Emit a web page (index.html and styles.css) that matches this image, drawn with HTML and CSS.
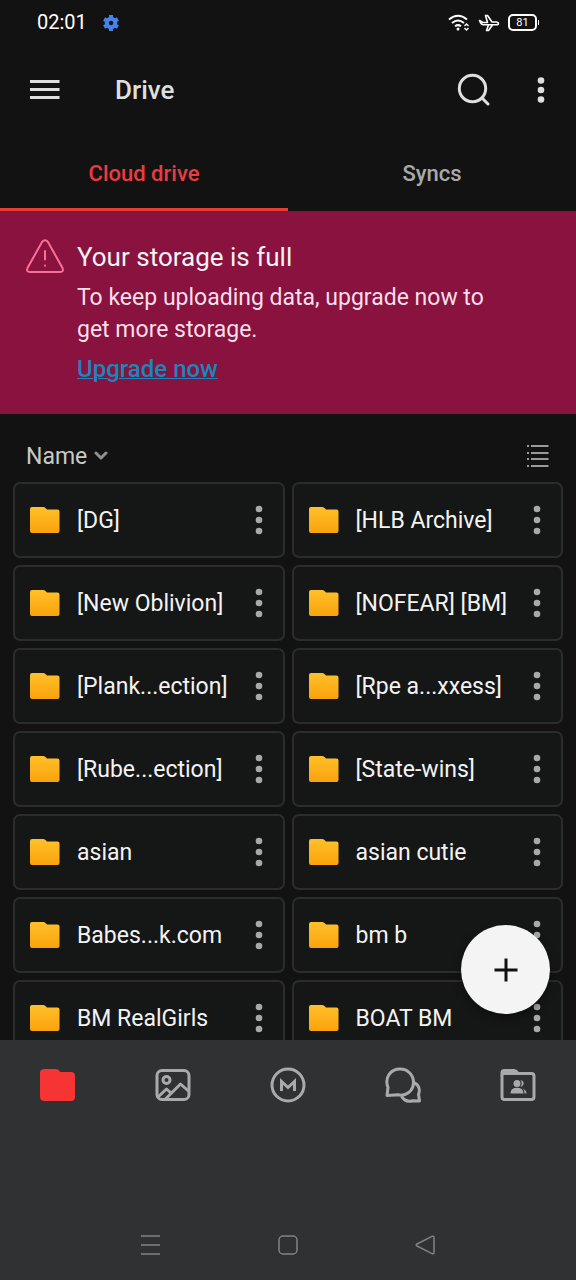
FILE: index.html
```html
<!DOCTYPE html>
<html lang="en">
<head>
<meta charset="utf-8">
<meta name="viewport" content="width=device-width, initial-scale=1">
<title>Drive</title>
<link rel="stylesheet" href="styles.css">
</head>
<body>
<svg class="sprite" aria-hidden="true">
  <defs>
    <linearGradient id="gold" x1="0" y1="0" x2="0" y2="1"><stop offset="0" stop-color="#ffc02a"/><stop offset="1" stop-color="#faa30c"/></linearGradient>
    <symbol id="folder" viewBox="0 0 30 26"><path fill="url(#gold)" d="M2 0H13Q14.500 0 15.500 1L17 2.500H27.500Q29.500 2.500 29.500 4.500V24Q29.500 26 27.500 26H2Q0 26 0 24V2Q0 0 2 0Z"/></symbol>
    <symbol id="dots" viewBox="0 0 8 30"><g fill="currentColor"><circle cx="4" cy="4" r="3.300"/><circle cx="4" cy="15" r="3.300"/><circle cx="4" cy="26" r="3.300"/></g></symbol>
  </defs>
</svg>
<div class="screen">
  <div class="status">
    <span class="clock">02:01</span>
    <svg class="gear" width="16" height="16" viewBox="0 0 16 16"><path fill="none" stroke="#4583ec" stroke-width="4" d="M8 3.800A4.200 4.200 0 1 1 8 12.200A4.200 4.200 0 1 1 8 3.800"/><path stroke="#4583ec" stroke-width="4" d="M8 0V3M8 13V16M1.100 4L3.700 5.500M12.300 10.500L14.900 12M1.100 12L3.700 10.500M12.300 5.500L14.900 4"/></svg>
    <div class="status-right">
      <svg width="22" height="18" viewBox="0 0 22 18" fill="none" stroke="#fff" stroke-width="2"><path d="M1 5.500Q10 -2 19 5.500M4 9Q10 4 16 9M7 12.300Q10 10 13 12.300"/><circle cx="10" cy="15" r="1.500" fill="#fff" stroke="none"/><path stroke-width="1.400" d="M16.500 12l2-2 2 2M16.500 14l2 2 2-2"/></svg>
      <svg width="22" height="18" viewBox="0 0 22 18" fill="none" stroke="#fff" stroke-width="1.600" stroke-linejoin="round"><path d="M1.500 6.500L5 8.500H9.500L7.500 1.500H9.500L14 8H18.500Q20.500 8.300 20.500 9.500T18.500 10.700H5Q3 10.500 1.500 6.500ZM10.500 11L8.500 16.500H10.500L14.500 11"/></svg>
      <span class="battery">81</span>
    </div>
  </div>

  <header class="appbar">
    <button class="icon-btn" aria-label="Menu"><svg width="30" height="20" viewBox="0 0 30 20" stroke="#dfdfdf" stroke-width="3"><path d="M0 1.500H29.500M0 9.500H29.500M0 17.500H29.500"/></svg></button>
    <h1 class="title">Drive</h1>
    <button class="icon-btn search" aria-label="Search"><svg width="34" height="34" viewBox="0 0 34 34" fill="none" stroke="#dfdfdf" stroke-width="3" stroke-linecap="round"><circle cx="15.500" cy="15.500" r="13.200"/><path d="M25 25L31 31"/></svg></button>
    <button class="icon-btn" aria-label="More options"><svg width="8" height="26" viewBox="0 0 8 26" fill="#dfdfdf"><circle cx="4" cy="3.500" r="3.300"/><circle cx="4" cy="13" r="3.300"/><circle cx="4" cy="22.500" r="3.300"/></svg></button>
  </header>

  <nav class="tabs">
    <button class="tab active">Cloud drive</button>
    <button class="tab">Syncs</button>
  </nav>

  <section class="banner">
    <svg class="warning" width="38" height="36" viewBox="0 0 38 36" fill="none" stroke="#fd6f95" stroke-width="2" stroke-linecap="round"><path d="M16 3Q19-.6 22 3L36.500 29Q38 33 34 33H4Q0 33 1.500 29Z"/><path d="M19 12V20.500M19 26.500V26.700"/></svg>
    <div class="banner-text">
      <h2 class="banner-title">Your storage is full</h2>
      <p class="banner-body">To keep uploading data, upgrade now to get more storage.</p>
      <a class="upgrade" href="#">Upgrade now</a>
    </div>
  </section>

  <main class="content">
    <div class="sort-row">
      <button class="sort">Name <svg width="14" height="10" viewBox="0 0 14 10" fill="none" stroke="#909090" stroke-width="3" stroke-linecap="round" stroke-linejoin="round"><path d="M2 2L7 7L12 2"/></svg></button>
      <button class="icon-btn" aria-label="List view"><svg width="22" height="22" viewBox="0 0 22 22" stroke="#9b9b9b" stroke-width="2"><path d="M0 1H2M4 1H21.500M0 8H2M4 8H21.500M0 14H2M4 14H21.500M0 21H2M4 21H21.500"/></svg></button>
    </div>
    <div class="grid">
      <article class="card"><svg class="folder"><use href="#folder"/></svg><span class="name">[DG]</span><button class="more" aria-label="Options for [DG]"><svg class="dots"><use href="#dots"/></svg></button></article>
      <article class="card"><svg class="folder"><use href="#folder"/></svg><span class="name">[HLB Archive]</span><button class="more" aria-label="Options for [HLB Archive]"><svg class="dots"><use href="#dots"/></svg></button></article>
      <article class="card"><svg class="folder"><use href="#folder"/></svg><span class="name">[New Oblivion]</span><button class="more" aria-label="Options for [New Oblivion]"><svg class="dots"><use href="#dots"/></svg></button></article>
      <article class="card"><svg class="folder"><use href="#folder"/></svg><span class="name">[NOFEAR] [BM]</span><button class="more" aria-label="Options for [NOFEAR] [BM]"><svg class="dots"><use href="#dots"/></svg></button></article>
      <article class="card"><svg class="folder"><use href="#folder"/></svg><span class="name">[Plank...ection]</span><button class="more" aria-label="Options for [Plank...ection]"><svg class="dots"><use href="#dots"/></svg></button></article>
      <article class="card"><svg class="folder"><use href="#folder"/></svg><span class="name">[Rpe a...xxess]</span><button class="more" aria-label="Options for [Rpe a...xxess]"><svg class="dots"><use href="#dots"/></svg></button></article>
      <article class="card"><svg class="folder"><use href="#folder"/></svg><span class="name">[Rube...ection]</span><button class="more" aria-label="Options for [Rube...ection]"><svg class="dots"><use href="#dots"/></svg></button></article>
      <article class="card"><svg class="folder"><use href="#folder"/></svg><span class="name">[State-wins]</span><button class="more" aria-label="Options for [State-wins]"><svg class="dots"><use href="#dots"/></svg></button></article>
      <article class="card"><svg class="folder"><use href="#folder"/></svg><span class="name">asian</span><button class="more" aria-label="Options for asian"><svg class="dots"><use href="#dots"/></svg></button></article>
      <article class="card"><svg class="folder"><use href="#folder"/></svg><span class="name">asian cutie</span><button class="more" aria-label="Options for asian cutie"><svg class="dots"><use href="#dots"/></svg></button></article>
      <article class="card"><svg class="folder"><use href="#folder"/></svg><span class="name">Babes...k.com</span><button class="more" aria-label="Options for Babes...k.com"><svg class="dots"><use href="#dots"/></svg></button></article>
      <article class="card"><svg class="folder"><use href="#folder"/></svg><span class="name">bm b</span><button class="more" aria-label="Options for bm b"><svg class="dots"><use href="#dots"/></svg></button></article>
      <article class="card"><svg class="folder"><use href="#folder"/></svg><span class="name">BM RealGirls</span><button class="more" aria-label="Options for BM RealGirls"><svg class="dots"><use href="#dots"/></svg></button></article>
      <article class="card"><svg class="folder"><use href="#folder"/></svg><span class="name">BOAT BM</span><button class="more" aria-label="Options for BOAT BM"><svg class="dots"><use href="#dots"/></svg></button></article>
    </div>
    <button class="fab" aria-label="Add"><svg width="24" height="24" viewBox="0 0 24 24" stroke="#111" stroke-width="3"><path d="M12 0.500V23.500M0.500 12H23.500"/></svg></button>
  </main>

  <footer class="bottom">
    <nav class="bottom-nav">
      <button class="nav-btn" aria-label="Drive"><svg width="36" height="36" viewBox="0 0 36 36"><path fill="#f73434" d="M4.500 2H16Q18 2 19 3.500L20.500 5H31Q35 5 35 9V29.500Q35 34 31 34H4.500Q0 34 0 29.500V6Q0 2 4.500 2Z"/></svg></button>
      <button class="nav-btn" aria-label="Photos"><svg width="36" height="36" viewBox="0 0 36 36" fill="none" stroke="#a9aaab" stroke-width="3" stroke-linejoin="round"><rect x="2" y="3.500" width="32" height="29" rx="5"/><circle cx="11.500" cy="13" r="3.500"/><path d="M3 30L11.500 22L16 26M10 32.500L25.500 17L34 24.500"/></svg></button>
      <button class="nav-btn" aria-label="Home"><svg width="36" height="36" viewBox="0 0 36 36" fill="none" stroke="#a9aaab" stroke-width="3"><circle cx="18" cy="18" r="16"/><path d="M11.500 24V14.500L18 20.500L24.500 14.500V24"/></svg></button>
      <button class="nav-btn" aria-label="Chat"><svg width="36" height="36" viewBox="0 0 36 36" fill="none" stroke="#a9aaab" stroke-width="3" stroke-linejoin="round"><path d="M2 28.500L3 20.500C-1 10 6 2 15 2C23 2 28.500 8 28.500 15.500C28.500 24 21 29.500 13 27.800Z"/><path d="M16.500 29C19 34 24 34.700 28 33.700L34.500 34L33.500 27.500C35.500 22 33.500 17.500 28.500 15.500"/></svg></button>
      <button class="nav-btn" aria-label="Shared"><svg width="36" height="36" viewBox="0 0 36 36"><path fill="none" stroke="#a9aaab" stroke-width="3" d="M2 8V30Q2 32.500 4.500 32.500H31.500Q34 32.500 34 30V9Q34 6.500 31.500 6.500H2"/><g fill="#a9aaab"><path d="M4.500 2H14Q16 2 17.500 3.500L20 6.500H5Q3 6.500 2 9H.5V6Q.5 2 4.500 2Z"/><circle cx="17" cy="16.500" r="3.500"/><path d="M10.500 26.500Q10.500 20.700 17 20.700T23.500 26.500ZM20.500 13Q24.500 14 23.500 17.500Q22.500 19.700 20.500 20Q23 16.500 20.500 13ZM23 21.500Q26 23 26.500 26.500H24.500Q24.500 23.500 23 21.500Z"/></g></svg></button>
    </nav>
    <div class="system-nav">
      <button class="nav-btn" aria-label="Recent apps"><svg width="20" height="20" viewBox="0 0 20 20" stroke="#818284" stroke-width="1.500"><path d="M0 1H19M0 10H19M0 19H19"/></svg></button>
      <button class="nav-btn" aria-label="Home screen"><svg width="20" height="20" viewBox="0 0 20 20" fill="none" stroke="#818284" stroke-width="1.500"><rect x="1" y="1" width="18" height="18" rx="4"/></svg></button>
      <button class="nav-btn" aria-label="Back"><svg width="20" height="20" viewBox="0 0 20 20" fill="none" stroke="#818284" stroke-width="1.500" stroke-linejoin="round"><path d="M2 9L17 1.300Q19 .8 19 2.500V17.500Q19 19.200 17 18.700L2 11Q.3 10 2 9Z"/></svg></button>
    </div>
  </footer>
</div>
</body>
</html>
```
FILE: styles.css
```css
* {
  box-sizing: border-box;
}

body {
  margin: 0;
  background: #121212;
  color: #f3f3f3;
  font-family: Roboto, "Liberation Sans", sans-serif;
}

button {
  padding: 0;
  border: 0;
  background: none;
  color: inherit;
  font: inherit;
  cursor: pointer;
}

svg {
  display: block;
  flex: none;
}

.sprite {
  position: absolute;
  width: 0;
  height: 0;
}

.screen {
  display: flex;
  flex-direction: column;
  height: 100vh;
}

.status {
  display: flex;
  align-items: center;
  gap: 16px;
  padding: 10px 36px 10px 37px;
  line-height: 25px;
}

.clock {
  color: #fff;
  font-size: 20px;
}

.status-right {
  display: flex;
  align-items: center;
  gap: 8px;
  margin-left: auto;
}

.battery {
  position: relative;
  width: 29px;
  margin-right: 3px;
  border: 2px solid #fff;
  border-radius: 5px;
  color: #fff;
  font-size: 11px;
  line-height: 13px;
  text-align: center;
}

.battery::after {
  content: "";
  position: absolute;
  top: 4px;
  right: -4px;
  width: 1px;
  height: 5px;
  background: #fff;
}

.appbar {
  display: flex;
  align-items: center;
  height: 90px;
  padding: 0 31px 0 30px;
}

.title {
  flex: 1;
  margin: 0;
  padding-left: 55px;
  color: #dfdfdf;
  font-size: 26px;
  font-weight: 500;
}

.search {
  margin-right: 46px;
}

.tabs {
  display: flex;
}

.tab {
  flex: 1;
  height: 76px;
  padding-top: 3px;
  border-bottom: 3px solid transparent;
  color: #a9a9a9;
  font-size: 22px;
  font-weight: 500;
}

.tab.active {
  border-color: #e93b34;
  color: #ee3a41;
}

.banner {
  display: flex;
  gap: 13px;
  padding: 28px 26px 29px;
  background: #89123f;
}

.banner-text {
  max-width: 430px;
}

.banner-title {
  margin: 0 0 7px;
  font-size: 26px;
  font-weight: 400;
  line-height: 36px;
}

.banner-body {
  margin: 0 0 7px;
  color: #f7dfea;
  font-size: 23px;
  line-height: 32px;
}

.upgrade {
  display: block;
  color: #1c85b9;
  font-size: 24px;
  font-weight: 500;
  line-height: 32px;
  text-decoration-thickness: 1px;
}

.content {
  position: relative;
  flex: 1;
  min-height: 0;
  overflow: hidden;
}

.sort-row {
  display: flex;
  align-items: center;
  justify-content: space-between;
  height: 68px;
  padding: 16px 27px 0 26px;
}

.sort {
  display: flex;
  align-items: center;
  gap: 7px;
  color: #c9c9c9;
  font-size: 23px;
}

.grid {
  display: grid;
  grid-template-columns: 1fr 1fr;
  gap: 7px;
  padding: 0 13px;
}

.card {
  display: flex;
  align-items: center;
  height: 76px;
  padding: 0 20px 0 15px;
  border: 2px solid #2b2c2c;
  border-radius: 7px;
  background: #151716;
}

.folder {
  width: 30px;
  height: 26px;
}

.name {
  flex: 1;
  padding-left: 17px;
  font-size: 23px;
  white-space: nowrap;
}

.more {
  color: #a9a9a9;
}

.dots {
  width: 8px;
  height: 30px;
}

.fab {
  position: absolute;
  right: 26px;
  bottom: 26px;
  display: grid;
  place-items: center;
  width: 89px;
  height: 89px;
  border-radius: 50%;
  background: #f4f4f4;
  box-shadow: 0 4px 10px rgba(0, 0, 0, 0.4);
}

.bottom {
  display: flex;
  flex-direction: column;
  justify-content: space-between;
  height: 240px;
  background: #303133;
}

.bottom-nav {
  display: flex;
  height: 90px;
}

.nav-btn {
  display: grid;
  flex: 1;
  place-items: center;
}

.system-nav {
  display: flex;
  height: 70px;
  padding: 0 82px;
}
```
